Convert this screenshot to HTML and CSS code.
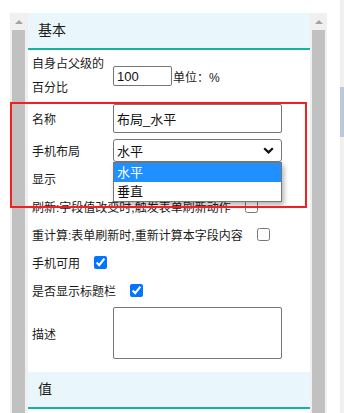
FILE: index.html
```html
<!DOCTYPE html>
<html lang="zh-CN">
<head>
    <meta charset="UTF-8">
    <title>字段属性</title>
    <link rel="stylesheet" href="styles.css">
</head>
<body>
    <div class="page">
        <div class="frame">
            <div class="scrollbar">
                <div class="arrow"><span class="tri"></span></div>
                <div class="thumb"></div>
            </div>

            <div class="panel">
                <div class="group-title">基本</div>
                <div class="form">
                    <div class="row row-tall">
                        <div class="label label-wrap">自身占父级的百分比</div>
                        <input class="num-input" type="text" value="100">
                        <span class="unit">单位：%</span>
                    </div>
                    <div class="row row-name">
                        <div class="label">名称</div>
                        <input class="text-input" type="text" value="布局_水平">
                    </div>
                    <div class="row">
                        <div class="label">手机布局</div>
                        <div class="select-wrap">
                            <div class="select">
                                <span>水平</span>
                                <svg class="chevron" width="11" height="7" viewBox="0 0 11 7">
                                    <path d="M1.2 1.2 L5.5 5.4 L9.8 1.2" fill="none" stroke="#111" stroke-width="2.2"/>
                                </svg>
                            </div>
                            <div class="dropdown">
                                <div class="option selected">水平</div>
                                <div class="option">垂直</div>
                            </div>
                        </div>
                    </div>
                    <div class="row">
                        <div class="label">显示</div>
                    </div>
                    <div class="row">
                        <span>刷新:字段值改变时,触发表单刷新动作</span>
                        <input class="check" type="checkbox">
                    </div>
                    <div class="row">
                        <span>重计算:表单刷新时,重新计算本字段内容</span>
                        <input class="check" type="checkbox">
                    </div>
                    <div class="row">
                        <span>手机可用</span>
                        <input class="check" type="checkbox" checked>
                    </div>
                    <div class="row">
                        <span>是否显示标题栏</span>
                        <input class="check" type="checkbox" checked>
                    </div>
                    <div class="row row-desc">
                        <div class="label">描述</div>
                        <textarea class="desc"></textarea>
                    </div>
                </div>
                <div class="group-title">值</div>
            </div>

            <div class="scrollbar">
                <div class="arrow"><span class="tri"></span></div>
                <div class="thumb"></div>
            </div>
        </div>

        <div class="highlight"></div>
    </div>

    <div class="page-bar">
        <div class="page-thumb"></div>
    </div>
</body>
</html>
```

FILE: styles.css
```css
body {
    margin: 0;
    background: #fff;
    font-family: "Liberation Sans", "Noto Sans CJK SC", sans-serif;
    font-size: 12px;
    color: #1a1a1a;
    display: flex;
    height: 413px;
    overflow: hidden;
}
.page {
    width: 340px;
    position: relative;
}
.frame {
    display: flex;
    margin: 13px 0 0 10px;
    height: 400px;
    overflow: hidden;
}
.scrollbar {
    width: 17px;
    background: #f0f0f0;
    display: flex;
    flex-direction: column;
    flex-shrink: 0;
}
.scrollbar:first-child {
    width: 18px;
}
.arrow {
    height: 17px;
    display: flex;
    align-items: center;
    justify-content: center;
}
.tri {
    width: 0;
    height: 0;
    border-left: 4px solid transparent;
    border-right: 4px solid transparent;
    border-bottom: 4px solid #a3a3a3;
}
.thumb {
    flex: 1;
    margin: 0 2px;
    background: #c1c1c1;
}
.scrollbar:first-child .thumb {
    margin: 0 3px 0 2px;
}
.panel {
    width: 282px;
    flex-shrink: 0;
    background: #fff;
}
.group-title {
    height: 35px;
    line-height: 35px;
    padding-left: 10px;
    font-size: 14px;
    background: #e9f6fb;
    border-bottom: 2px solid #17b3a2;
}
.form {
    padding: 2px 0 10px 4px;
}
.row {
    display: flex;
    align-items: center;
    height: 28px;
    white-space: nowrap;
}
.row-tall {
    height: 48px;
}
.row-name {
    height: 36px;
}
.row-desc {
    height: 58px;
}
.label {
    width: 81px;
    flex-shrink: 0;
}
.label-wrap {
    white-space: normal;
    line-height: 24px;
}
.num-input,
.text-input,
.desc {
    box-sizing: border-box;
    margin: 0;
    border: 1px solid #767676;
    border-radius: 2px;
    font-family: "Liberation Sans", "Noto Sans CJK SC", sans-serif;
    font-size: 13px;
    color: #111;
    padding: 0 3px;
    outline: none;
}
.num-input {
    width: 59px;
    height: 20px;
}
.unit {
    margin-left: 1px;
}
.text-input {
    width: 169px;
    height: 29px;
}
.select-wrap {
    position: relative;
    width: 169px;
}
.select {
    box-sizing: border-box;
    height: 23px;
    border: 1px solid #767676;
    border-radius: 3px;
    padding: 0 7px 0 3px;
    font-size: 13px;
    color: #111;
    display: flex;
    align-items: center;
    justify-content: space-between;
}
.dropdown {
    position: absolute;
    top: 100%;
    left: 0;
    right: 0;
    background: #fff;
    border: 1px solid #767676;
    box-shadow: 2px 3px 5px rgba(0,0,0,0.3);
    z-index: 2;
}
.option {
    height: 19px;
    line-height: 19px;
    padding-left: 3px;
    font-size: 13px;
    color: #111;
}
.option.selected {
    background: #1e90ff;
    color: #fff;
}
.check {
    width: 13px;
    height: 13px;
    margin: 0 0 0 14px;
}
.desc {
    width: 169px;
    height: 52px;
    resize: none;
}
.highlight {
    position: absolute;
    left: 10px;
    top: 102px;
    width: 297px;
    height: 106px;
    box-sizing: border-box;
    border: 2px solid #f41f1f;
    z-index: 3;
    pointer-events: none;
}
.page-bar {
    width: 4px;
    height: 413px;
    background: #f0f0f0;
    display: flex;
    flex-direction: column;
}
.page-thumb {
    margin-top: 87px;
    height: 50px;
    background: #b9c9d9;
}
```
